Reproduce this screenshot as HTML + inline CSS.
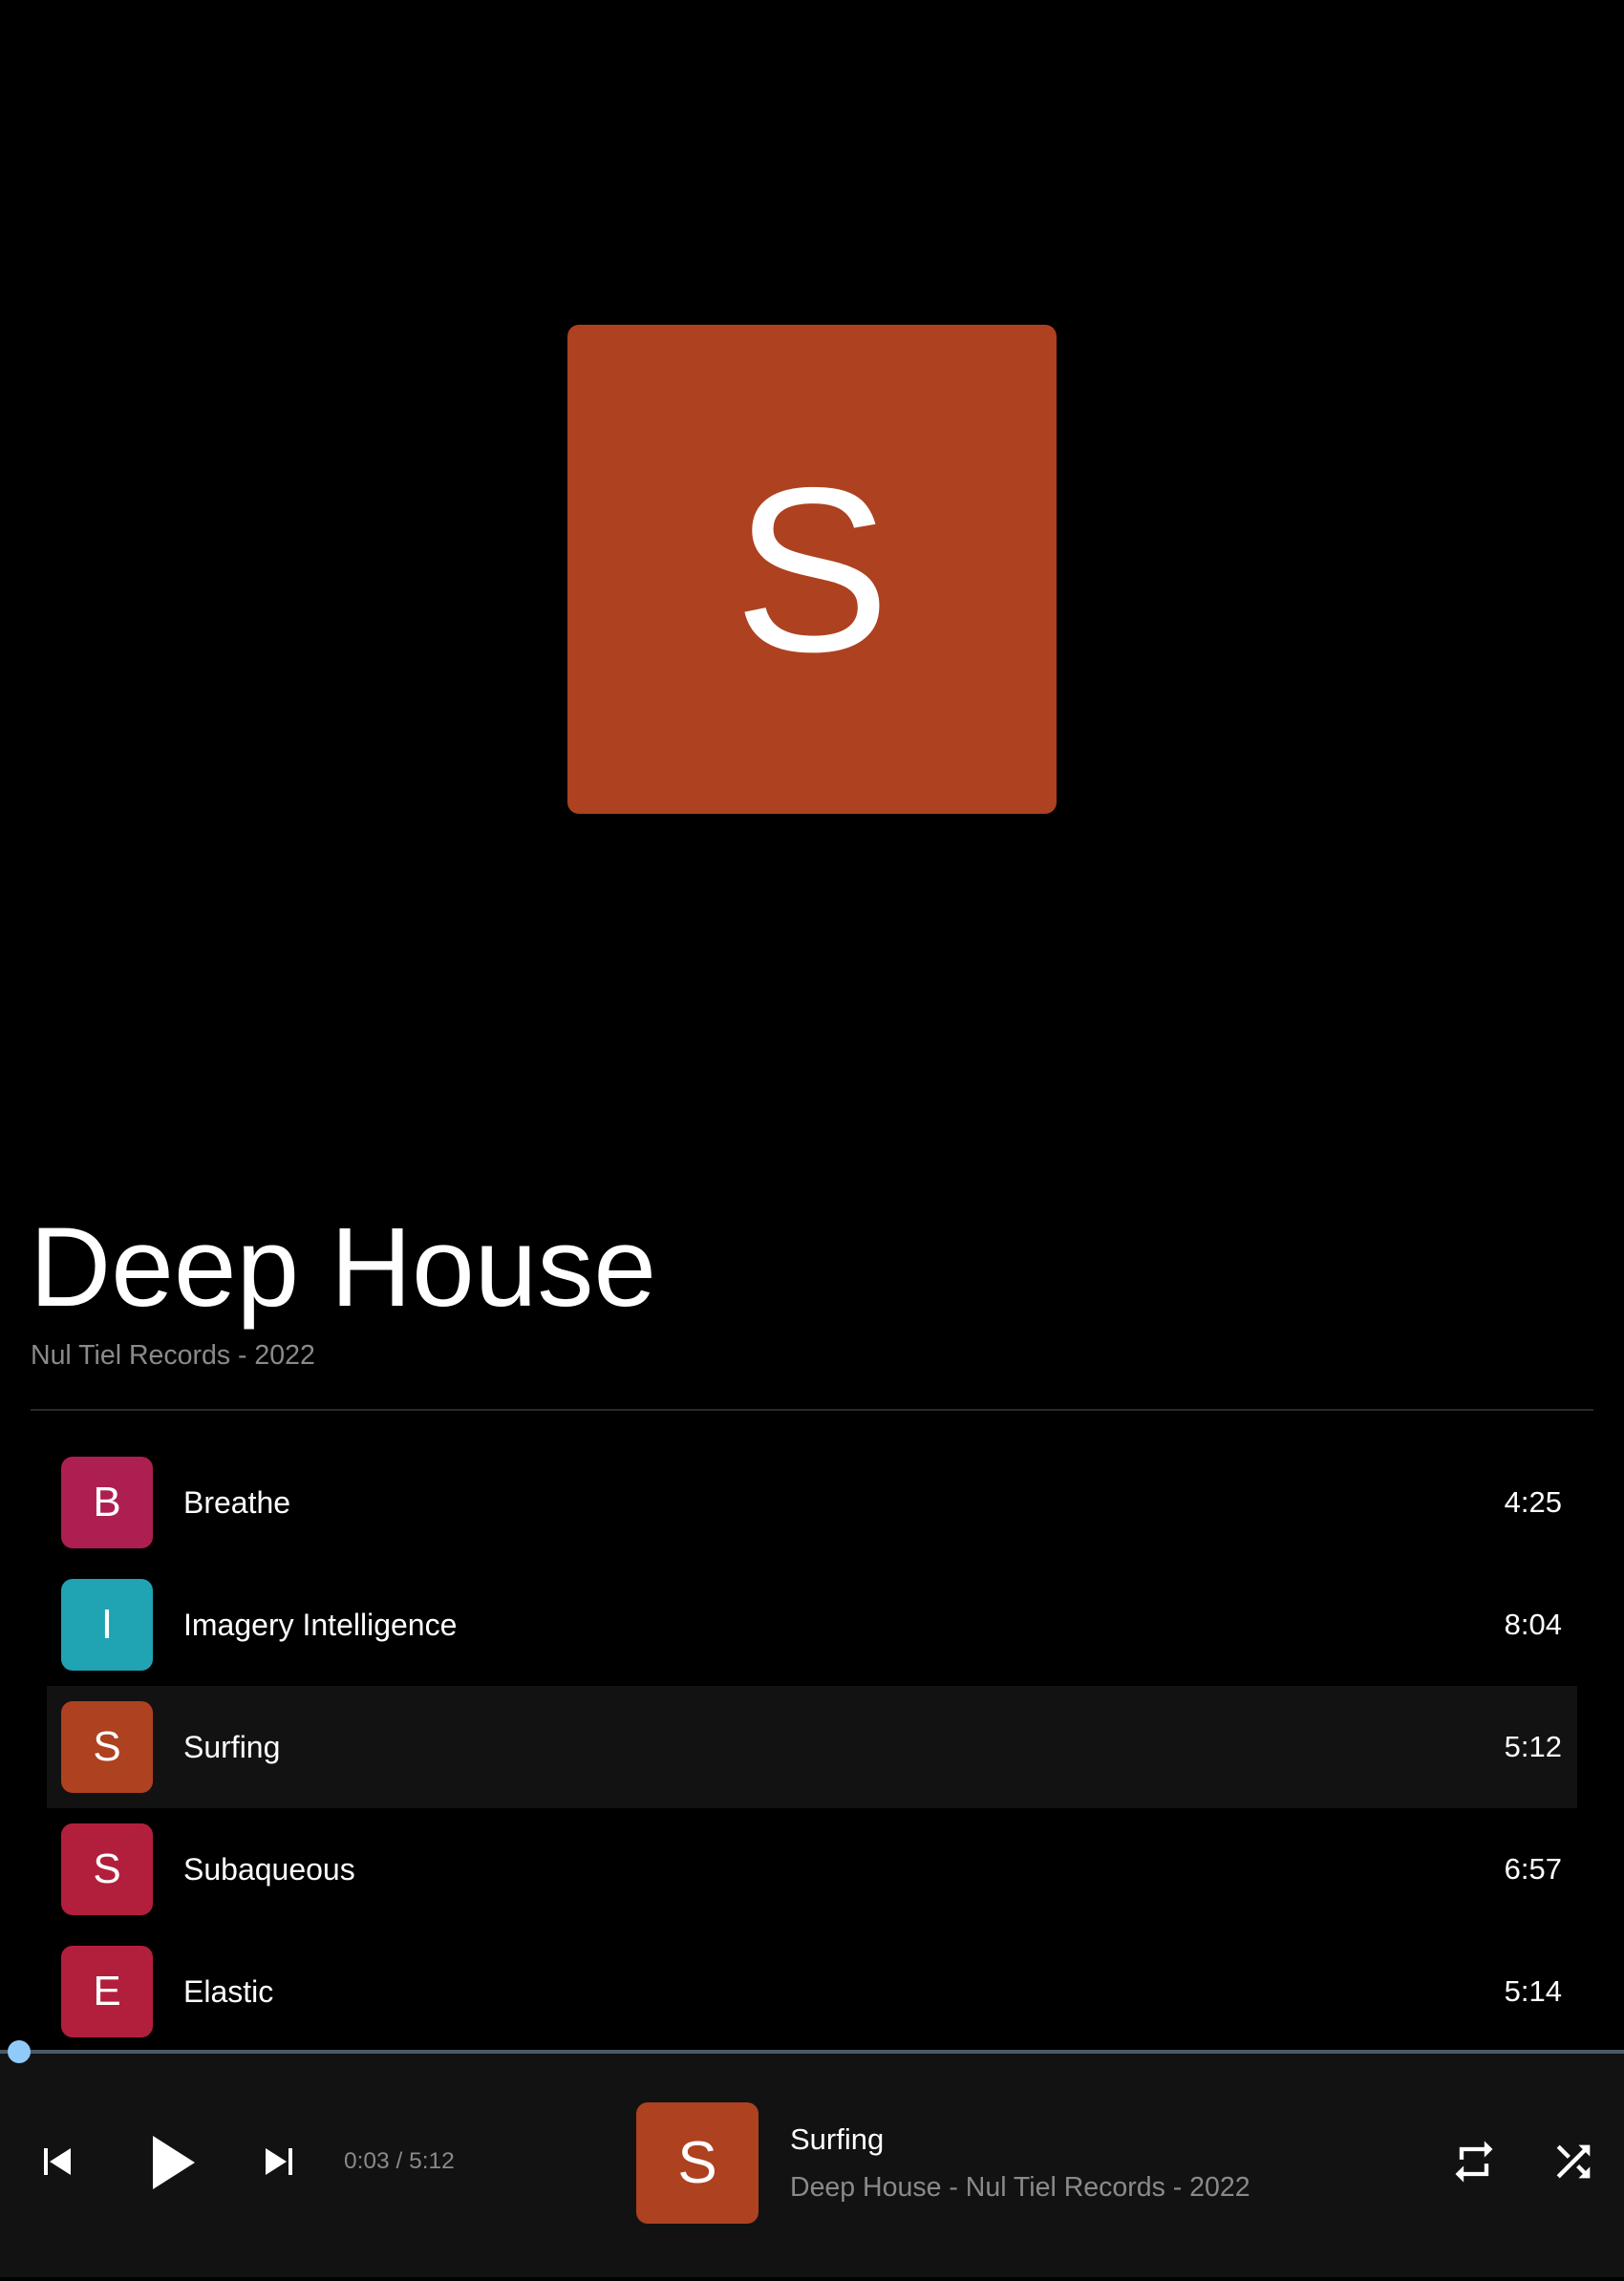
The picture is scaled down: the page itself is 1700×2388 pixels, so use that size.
<!DOCTYPE html>
<html><head><meta charset="utf-8"><style>
*{margin:0;padding:0;box-sizing:border-box}
body{width:1700px;height:2388px;background:#000;font-family:"Liberation Sans",sans-serif;color:#fff;position:relative;overflow:hidden}
.abs{position:absolute}
.cover{left:594px;top:340px;width:512px;height:512px;background:#ae4120;border-radius:12px;display:flex;align-items:center;justify-content:center;font-size:245px;line-height:1}
.title{left:31px;top:1257px;font-size:118px;line-height:140px}
.sub{left:32px;top:1403px;font-size:28.5px;color:#8a8a8a}
.hr{left:32px;top:1475px;width:1636px;height:2px;background:#2a2a2a}
.row{position:absolute;left:49px;width:1602px;height:128px;display:flex;align-items:center}
.row.hl{background:#121212}
.ic{margin-left:15px;width:96px;height:96px;border-radius:12px;display:flex;align-items:center;justify-content:center;font-size:44px}
.nm{margin-left:32px;font-size:32px;flex:1}
.du{font-size:31px;margin-right:16px}
.bar{left:0;top:2150px;width:1700px;height:234px;background:#121212}
.prog{left:0;top:2146px;width:1700px;height:4px;background:#4b5968}
.thumb{left:8px;top:2136px;width:24px;height:24px;border-radius:50%;background:#90caf9}
</style></head><body>
<div class="abs cover">S</div>
<div class="abs title">Deep House</div>
<div class="abs sub">Nul Tiel Records - 2022</div>
<div class="abs hr"></div>

<div class="row" style="top:1509px"><div class="ic" style="background:#ad1f50">B</div><div class="nm">Breathe</div><div class="du">4:25</div></div>
<div class="row" style="top:1637px"><div class="ic" style="background:#20a3b3">I</div><div class="nm">Imagery Intelligence</div><div class="du">8:04</div></div>
<div class="row hl" style="top:1765px"><div class="ic" style="background:#ae4120">S</div><div class="nm">Surfing</div><div class="du">5:12</div></div>
<div class="row" style="top:1893px"><div class="ic" style="background:#b21f3c">S</div><div class="nm">Subaqueous</div><div class="du">6:57</div></div>
<div class="row" style="top:2021px"><div class="ic" style="background:#b21f3c">E</div><div class="nm">Elastic</div><div class="du">5:14</div></div>

<div class="abs bar"></div>
<div class="abs prog"></div>
<div class="abs thumb"></div>

<svg class="abs" style="left:44px;top:2247px" width="32" height="32" viewBox="0 0 32 32"><rect x="2" y="2" width="4" height="28" fill="#fff"/><polygon points="30,2 30,30 8,16" fill="#fff"/></svg>
<svg class="abs" style="left:158px;top:2235px" width="48" height="58" viewBox="0 0 48 58"><polygon points="2,1 2,57 46,29" fill="#fff"/></svg>
<svg class="abs" style="left:276px;top:2247px" width="32" height="32" viewBox="0 0 32 32"><polygon points="2,2 2,30 24,16" fill="#fff"/><rect x="26" y="2" width="4" height="28" fill="#fff"/></svg>
<div class="abs" style="left:360px;top:2249px;font-size:24.5px;color:#8a8a8a">0:03 / 5:12</div>

<div class="abs" style="left:666px;top:2201px;width:128px;height:127px;background:#ae4120;border-radius:12px;display:flex;align-items:center;justify-content:center;font-size:62px">S</div>
<div class="abs" style="left:827px;top:2222px;font-size:31px">Surfing</div>
<div class="abs" style="left:827px;top:2274px;font-size:28.5px;color:#8a8a8a">Deep House - Nul Tiel Records - 2022</div>

<svg class="abs" style="left:1517px;top:2236px" width="52" height="54" viewBox="0 0 24 24"><path d="M7 7h10v3l4-4-4-4v3H5v6h2V7zm10 10H7v-3l-4 4 4 4v-3h12v-6h-2v4z" fill="#fff"/></svg>
<svg class="abs" style="left:1621px;top:2236px" width="52" height="54" viewBox="0 0 24 24"><path d="M10.59 9.17L5.41 4 4 5.41l5.17 5.17 1.42-1.41zM14.5 4l2.04 2.04L4 18.59 5.41 20 17.960 7.46 20 9.5V4h-5.5zm.33 9.41l-1.41 1.41 3.13 3.13L14.5 20H20v-5.5l-2.04 2.04-3.13-3.13z" fill="#fff"/></svg>
</body></html>
